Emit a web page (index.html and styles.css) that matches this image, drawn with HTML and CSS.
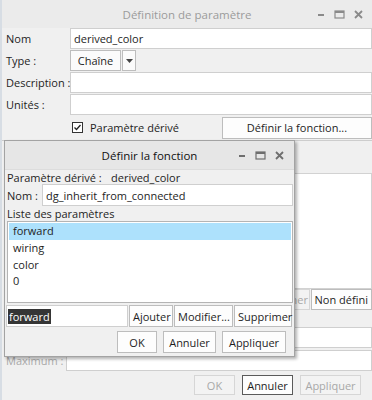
FILE: index.html
```html
<!DOCTYPE html>
<html lang="fr">
<head>
    <meta charset="UTF-8">
    <meta name="viewport" content="width=device-width, initial-scale=1.0">
    <title>Définition de paramètre</title>
    <link rel="stylesheet" href="styles.css">
</head>
<body>
<div class="page">
    <div class="win outer">
        <div class="titlebar inactive">
            <span></span>
            <span class="title">Définition de paramètre</span>
            <div class="ctrls">
                <svg width="8" height="8" viewBox="0 0 8 8"><rect x="1" y="4" width="6" height="2" fill="currentColor"/></svg>
                <svg width="11" height="9" viewBox="0 0 11 9"><rect x="1" y="1" width="9" height="7" fill="none" stroke="currentColor" stroke-width="1.2"/><rect x="1" y="1" width="9" height="2" fill="currentColor"/></svg>
                <svg width="9" height="9" viewBox="0 0 9 9"><path d="M1 1L8 8M8 1L1 8" stroke="currentColor" stroke-width="1.8"/></svg>
            </div>
        </div>

        <div class="form">
            <label>Nom</label>
            <div class="field">derived_color</div>
            <label>Type :</label>
            <div class="combo"><span class="combo-btn">Chaîne</span><span class="combo-arrow"><svg width="7" height="4" viewBox="0 0 7 4"><path d="M0 0H7L3.5 4Z" fill="#444"/></svg></span></div>
            <label>Description :</label>
            <div class="field"></div>
            <label>Unités :</label>
            <div class="field"></div>
        </div>

        <div class="derived-row">
            <span class="check"><svg width="11" height="11" viewBox="0 0 11 11"><rect x="0.5" y="0.5" width="10" height="10" fill="#fff" stroke="#333"/><path d="M2.5 5.5L4.5 7.5L8.5 3" fill="none" stroke="#222" stroke-width="1.3"/></svg></span>
            <span>Paramètre dérivé</span>
            <button class="btn wide">Définir la fonction...</button>
        </div>
        <div class="sep"></div>

        <div class="middle">
            <div class="listbox"></div>
            <div class="list-actions">
                <button class="btn off">Supprimer</button>
                <button class="btn">Non défini</button>
            </div>
        </div>

        <div class="form range">
            <label class="off-text">Minimum :</label>
            <div class="field"></div>
            <label class="off-text">Maximum :</label>
            <div class="field"></div>
        </div>

        <div class="actions">
            <button class="btn off ok">OK</button>
            <button class="btn default">Annuler</button>
            <button class="btn off">Appliquer</button>
        </div>
    </div>

    <div class="win inner">
        <div class="titlebar">
            <span></span>
            <span class="title">Définir la fonction</span>
            <div class="ctrls">
                <svg width="8" height="8" viewBox="0 0 8 8"><rect x="1" y="4" width="6" height="2" fill="currentColor"/></svg>
                <svg width="11" height="9" viewBox="0 0 11 9"><rect x="1" y="1" width="9" height="7" fill="none" stroke="currentColor" stroke-width="1.2"/><rect x="1" y="1" width="9" height="2" fill="currentColor"/></svg>
                <svg width="9" height="9" viewBox="0 0 9 9"><path d="M1 1L8 8M8 1L1 8" stroke="currentColor" stroke-width="1.8"/></svg>
            </div>
        </div>
        <div class="inner-body">
            <div class="info"><span class="info-label">Paramètre dérivé :</span><span>derived_color</span></div>
            <div class="name-row"><label>Nom :</label><div class="field">dg_inherit_from_connected</div></div>
            <div class="list-label">Liste des paramètres</div>
            <ul class="params">
                <li class="sel">forward</li>
                <li>wiring</li>
                <li>color</li>
                <li>0</li>
            </ul>
            <div class="edit-row">
                <div class="field edit"><span class="selected-text">forward</span></div>
                <button class="btn">Ajouter</button>
                <button class="btn">Modifier...</button>
                <button class="btn">Supprimer</button>
            </div>
            <div class="actions inner-actions">
                <button class="btn ok">OK</button>
                <button class="btn">Annuler</button>
                <button class="btn">Appliquer</button>
            </div>
        </div>
    </div>
</div>
</body>
</html>
```

FILE: styles.css
```css
* {
    box-sizing: border-box;
}
body {
    margin: 0;
    font-family: 'Open Sans', 'Noto Sans', sans-serif;
    font-size: 11px;
    color: #1e1e1e;
    background-color: #f0f0f0;
}
.page {
    position: relative;
    width: 372px;
    height: 400px;
    overflow: hidden;
}
.win {
    background-color: #f0f0f0;
}
.outer {
    height: 400px;
    border-left: 2px solid #d7dde4;
}

/* barre de titre */
.titlebar {
    display: grid;
    grid-template-columns: 62px 1fr 62px;
    align-items: center;
    height: 28px;
    background-color: #ebebeb;
}
.titlebar .title {
    text-align: center;
    font-size: 11.5px;
}
.titlebar.inactive .title {
    color: #9b9b9b;
}
.ctrls {
    display: flex;
    align-items: center;
    justify-content: flex-end;
    gap: 9px;
    padding-right: 9px;
    color: #8a8a8a;
}
.ctrls svg {
    display: block;
}

/* champs */
.form {
    display: grid;
    grid-template-columns: 64px 1fr;
    row-gap: 1px;
    padding-left: 4px;
}
.form label {
    display: flex;
    align-items: center;
    height: 21px;
    white-space: nowrap;
}
.field {
    height: 21px;
    background-color: #fff;
    border: 1px solid #cfcfcf;
    padding: 0 3px;
    display: flex;
    align-items: center;
}
.combo {
    display: flex;
    gap: 1px;
    height: 21px;
}
.combo-btn,
.combo-arrow {
    display: flex;
    align-items: center;
    justify-content: center;
    background-color: #fbfbfb;
    border: 1px solid #bdbdbd;
}
.combo-btn {
    width: 51px;
}
.combo-arrow {
    width: 14px;
}

.btn {
    font: inherit;
    color: #1e1e1e;
    background-color: #fdfdfd;
    border: 1px solid #bdbdbd;
    padding: 0;
    height: 21px;
    white-space: nowrap;
}
.btn.off {
    color: #a8a8a8;
    border-color: #d6d6d6;
    background-color: #f3f3f3;
}
.btn.default {
    border-color: #5a5a5a;
}

.derived-row {
    display: flex;
    align-items: center;
    height: 23px;
    margin-top: 1px;
}
.check {
    display: flex;
    margin: 0 7px 0 70px;
}
.btn.wide {
    margin-left: auto;
    width: 150px;
    height: 22px;
}
.sep {
    margin-top: 1px;
    border-top: 1px solid #cdcdcd;
}

.middle {
    height: 186px;
    padding-top: 32px;
}
.listbox {
    margin-left: 4px;
    height: 116px;
    background-color: #fff;
    border: 1px solid #d2d2d2;
}
.list-actions {
    display: flex;
    justify-content: flex-end;
    gap: 1px;
}
.list-actions .btn {
    height: 21px;
    padding: 0 3px;
}
.list-actions .btn.off {
    width: 60px;
}

.range {
    padding-left: 4px;
    row-gap: 2px;
}
.range .field {
    margin-left: -4px;
}
.off-text {
    color: #a9a9a9;
}

.actions {
    display: flex;
    justify-content: flex-end;
    gap: 7px;
    padding: 4px 11px 0 0;
}
.actions .btn {
    height: 20px;
}
.actions .btn:nth-child(1) { width: 41px; }
.actions .btn:nth-child(2) { width: 51px; }
.actions .btn:nth-child(3) { width: 61px; }

/* fenêtre Définir la fonction */
.inner {
    position: absolute;
    left: 4px;
    top: 140px;
    width: 291px;
    height: 217px;
    border: 1px solid #a3a3a3;
    box-shadow: 2px 2px 3px rgba(0, 0, 0, 0.3);
}
.inner .titlebar {
    height: 29px;
    background-color: #e6e6e6;
    border-bottom: 1px solid #dcdcdc;
}
.inner .title {
    color: #111;
}
.inner .ctrls {
    color: #6e6e6e;
    padding-right: 10px;
}
.inner-body {
    padding: 0 1px 0 2px;
}
.info {
    display: flex;
    align-items: center;
    height: 13px;
    margin-top: 1px;
}
.info-label {
    width: 104px;
}
.name-row {
    display: flex;
    align-items: center;
    height: 22px;
}
.name-row label {
    width: 35px;
}
.name-row .field {
    flex: 1;
    height: 22px;
}
.list-label {
    height: 15px;
    display: flex;
    align-items: center;
}
.params {
    list-style: none;
    margin: 0;
    height: 82px;
    padding: 1px;
    background-color: #fff;
    border: 1px solid #b4b4b4;
}
.params li {
    height: 16.5px;
    line-height: 16.5px;
    padding-left: 4px;
}
.params li.sel {
    height: 17px;
    background-color: #ade1fc;
}
.edit-row {
    display: flex;
    gap: 1px;
    margin: 2px 0 0 -1px;
}
.edit-row .btn {
    height: 22px;
    padding: 0 3px;
}
.edit-row .btn:nth-child(2) { width: 44px; }
.edit-row .btn:nth-child(3) { width: 59px; }
.edit-row .btn:nth-child(4) { width: 58px; }
.field.edit {
    width: 122px;
    height: 22px;
    padding-left: 1px;
}
.selected-text {
    background-color: #353535;
    color: #fff;
    padding: 0 1px;
}
.inner-actions {
    gap: 6px;
    padding: 4px 7px 0 0;
}
.inner-actions .btn {
    height: 22px;
}
.inner-actions .btn:nth-child(1) { width: 40px; }
.inner-actions .btn:nth-child(2) { width: 53px; }
.inner-actions .btn:nth-child(3) { width: 64px; }
```
